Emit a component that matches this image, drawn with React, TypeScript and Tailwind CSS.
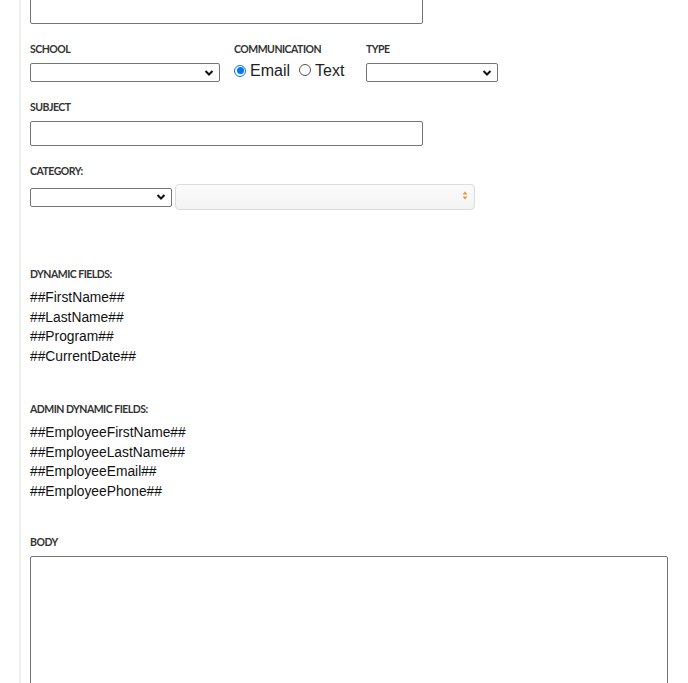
import React from "react";

const Label = ({ children }: { children: React.ReactNode }) => (
  <div className="text-[10.5px] leading-[14px] font-bold text-[#333] uppercase font-['Lato',sans-serif] tracking-[-0.5px] pt-[1px]">
    {children}
  </div>
);

const Chevron = () => (
  <svg width="10" height="7" viewBox="0 0 10 7" className="absolute right-[5px] top-1/2 -translate-y-1/2">
    <path d="M1.5 1.5 L5 5 L8.5 1.5" fill="none" stroke="#111" strokeWidth="2" />
  </svg>
);

const Select = ({ className }: { className: string }) => (
  <div className={`relative h-[19px] border border-[#767676] rounded-[2px] bg-white ${className}`}>
    <Chevron />
  </div>
);

const Radio = ({ checked }: { checked?: boolean }) => (
  <span
    className={`inline-flex items-center justify-center w-[12px] h-[12px] rounded-full border ${
      checked ? "border-[#0075ff] border-[1.5px]" : "border-[#555]"
    } bg-white`}
  >
    {checked && <span className="w-[7px] h-[7px] rounded-full bg-[#0075ff]" />}
  </span>
);

const dynamicFields = ["##FirstName##", "##LastName##", "##Program##", "##CurrentDate##"];
const adminFields = [
  "##EmployeeFirstName##",
  "##EmployeeLastName##",
  "##EmployeeEmail##",
  "##EmployeePhone##",
];

export default function App() {
  return (
    <div className="bg-white h-[683px] pl-[19px] font-['Liberation_Sans',Arial,sans-serif] text-[#111] overflow-hidden">
      <div className="border-l-2 border-[#efefef] pl-[9px] pr-[20px] min-h-[683px]">
        {/* message textarea (scrolled) */}
        <div className="w-[393px] h-[44px] -mt-[20px] border border-[#767676] rounded-[2px] bg-white" />

        <div className="mt-[17px] flex">
          <div className="w-[204px]">
            <Label>School</Label>
            <Select className="mt-[7px] w-[190px]" />
          </div>
          <div className="w-[132px]">
            <Label>Communication</Label>
            <div className="mt-[5px] flex items-center text-[16px] leading-[19px] text-[#222]">
              <Radio checked />
              <span className="ml-[4px]">Email</span>
              <span className="ml-[9px]"><Radio /></span>
              <span className="ml-[4px]">Text</span>
            </div>
          </div>
          <div>
            <Label>Type</Label>
            <Select className="mt-[7px] w-[132px]" />
          </div>
        </div>

        <div className="mt-[17px]">
          <Label>Subject</Label>
          <div className="mt-[7px] w-[393px] h-[25px] border border-[#767676] rounded-[2px] bg-white" />
        </div>

        <div className="mt-[17px]">
          <Label>Category:</Label>
          <div className="mt-[6px] flex items-center">
            <Select className="w-[142px]" />
            <div className="relative ml-[3px] w-[300px] h-[26px] border border-[#dcdcdc] rounded-[4px] bg-gradient-to-b from-[#fbfbfb] to-[#f3f3f3]">
              <svg width="6" height="9" viewBox="0 0 6 9" className="absolute right-[6px] top-[6px]">
                <path d="M0.5 3.5 L3 0.5 L5.5 3.5 Z" fill="#e29a3a" />
                <path d="M0.5 5.5 L3 8.5 L5.5 5.5 Z" fill="#e29a3a" />
              </svg>
            </div>
          </div>
        </div>

        <div className="mt-[56px]">
          <Label>Dynamic Fields:</Label>
          <div className="mt-[7px] text-[13.8px] leading-[19.5px] text-[#111]">
            {dynamicFields.map((f) => (
              <div key={f}>{f}</div>
            ))}
          </div>
        </div>

        <div className="mt-[35px]">
          <Label>Admin Dynamic Fields:</Label>
          <div className="mt-[7px] text-[13.8px] leading-[19.5px] text-[#111]">
            {adminFields.map((f) => (
              <div key={f}>{f}</div>
            ))}
          </div>
        </div>

        <div className="mt-[33px]">
          <Label>Body</Label>
          <div className="mt-[7px] w-[638px] h-[200px] border border-[#767676] rounded-[2px] bg-white" />
        </div>
      </div>
    </div>
  );
}
